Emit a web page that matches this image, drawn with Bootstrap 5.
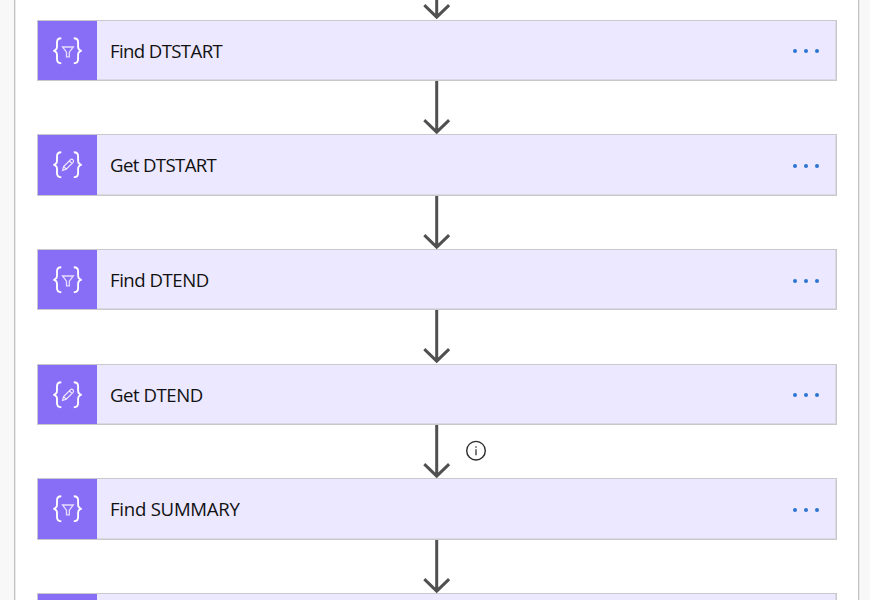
<!DOCTYPE html>
<html lang="en">
<head>
<meta charset="utf-8">
<meta name="viewport" content="width=device-width, initial-scale=1">
<title>Flow</title>
<link href="https://cdn.jsdelivr.net/npm/bootstrap@5.3.0/dist/css/bootstrap.min.css" rel="stylesheet">
<style>
body{background:#f8f8f8;font-family:"Open Sans","Noto Sans",sans-serif;color:#111}
.scope{height:600px;margin-left:14px;width:845px;background:#fff;border:solid #c2c2c2;border-width:0 1px;box-shadow:1px 0 #e9e9e9,inset 1px 0 #e9e9e9;padding-left:22px}
.step{width:800px;height:61.333px;background:#ece8ff;border:1px solid #c9c8cc;box-shadow:inset -1px -1px #dad8e2}
.step-icon{width:59px;background:#886df6}
.step-name{font-size:18.6px;line-height:24px;margin-left:13px;padding-top:1px;white-space:nowrap;letter-spacing:-.25px}
.name-tight{letter-spacing:-.62px}
.name-snug{letter-spacing:-.47px}
.link-gap{height:53.333px;padding-left:385px}
.link-gap.top-gap{height:19.6px}
.more{margin:2px 16px 0 auto}
.info{margin:15px 0 0 13px}
</style>
<script src="https://cdn.jsdelivr.net/npm/bootstrap@5.3.0/dist/js/bootstrap.bundle.min.js"></script>
</head>
<body class="overflow-hidden">
<svg class="d-none">
<symbol id="braces" viewBox="0 0 59 59"><path d="M23.300 17.200c-3.200 0-4.300 1.200-4.300 4v4.400c0 2.500-.9 3.900-3.600 4.200 2.700.3 3.600 1.700 3.600 4.200v4.200c0 2.800 1.100 4 4.300 4M35.800 17.200c3.200 0 4.300 1.200 4.300 4v4.400c0 2.500.9 3.900 3.600 4.200-2.700.3-3.600 1.700-3.600 4.200v4.200c0 2.800-1.100 4-4.300 4" fill="none" stroke="#fff" stroke-width="1.850"/></symbol>
<symbol id="filter" viewBox="0 0 59 59"><use href="#braces"/><path d="M24.500 26h10.800l-4 5.100v4.800h-2.800v-4.800z" fill="none" stroke="#e5deff" stroke-width="1.300"/></symbol>
<symbol id="pencil" viewBox="0 0 59 59"><use href="#braces"/><path d="M24.600 35.300l1-3.800 6.900-6.800q1.400-1 2.500.1t.1 2.500l-6.900 6.900zM25.600 31.500l2.600 2.700M31.400 25.900l2.600 2.600" fill="none" stroke="#eee9ff" stroke-width="1.200"/></symbol>
<symbol id="arrow" viewBox="0 0 30 54"><path d="M14.700 0V51.200M2.300 39.200L14.700 51.200L27.100 39.200" fill="none" stroke="#505050" stroke-width="3"/></symbol>
<symbol id="dots" viewBox="0 0 28 6"><g fill="#2b74d3"><circle cx="3" cy="3" r="2"/><circle cx="14" cy="3" r="2"/><circle cx="25" cy="3" r="2"/></g></symbol>
</svg>
<main class="scope overflow-hidden">
<div class="link-gap top-gap d-flex align-items-end"><svg class="flex-shrink-0" width="30" height="54"><use href="#arrow"/></svg></div>
<div class="step d-flex align-items-center"><div class="step-icon align-self-stretch"><svg width="59" height="59"><use href="#filter"/></svg></div><div class="step-name name-tight">Find DTSTART</div><svg class="more" width="28" height="6"><use href="#dots"/></svg></div>
<div class="link-gap d-flex"><svg width="30" height="54"><use href="#arrow"/></svg></div>
<div class="step d-flex align-items-center"><div class="step-icon align-self-stretch"><svg width="59" height="59"><use href="#pencil"/></svg></div><div class="step-name name-tight">Get DTSTART</div><svg class="more" width="28" height="6"><use href="#dots"/></svg></div>
<div class="link-gap d-flex"><svg width="30" height="54"><use href="#arrow"/></svg></div>
<div class="step d-flex align-items-center"><div class="step-icon align-self-stretch"><svg width="59" height="59"><use href="#filter"/></svg></div><div class="step-name name-snug">Find DTEND</div><svg class="more" width="28" height="6"><use href="#dots"/></svg></div>
<div class="link-gap d-flex"><svg width="30" height="54"><use href="#arrow"/></svg></div>
<div class="step d-flex align-items-center"><div class="step-icon align-self-stretch"><svg width="59" height="59"><use href="#pencil"/></svg></div><div class="step-name name-snug">Get DTEND</div><svg class="more" width="28" height="6"><use href="#dots"/></svg></div>
<div class="link-gap d-flex"><svg width="30" height="54"><use href="#arrow"/></svg><svg class="info" width="22" height="22" viewBox="0 0 22 22"><circle cx="11" cy="10.700" r="9.300" fill="none" stroke="#2b2b2b" stroke-width="1.400"/><path d="M11 9.300V15.200M11 6.300V7.800" stroke="#444" stroke-width="1.400"/></svg></div>
<div class="step d-flex align-items-center"><div class="step-icon align-self-stretch"><svg width="59" height="59"><use href="#filter"/></svg></div><div class="step-name">Find SUMMARY</div><svg class="more" width="28" height="6"><use href="#dots"/></svg></div>
<div class="link-gap d-flex"><svg width="30" height="54"><use href="#arrow"/></svg></div>
<div class="step d-flex align-items-center"><div class="step-icon align-self-stretch"></div></div>
</main>
</body>
</html>
